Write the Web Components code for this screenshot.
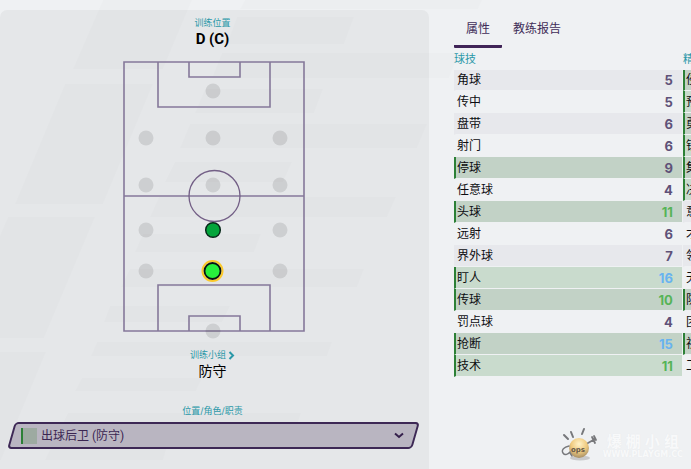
<!DOCTYPE html>
<html lang="zh-CN">
<head>
<meta charset="utf-8">
<title>训练位置</title>
<style>
  html { background: #eff1f3; }
  body { margin: 0; font-family: Inter, "Noto Sans CJK SC", sans-serif; color: #0c0c10; }
</style>
</head>
<body>
<player-screen></player-screen>

<script>
const define = (name, html, setup) => {
  const tpl = document.createElement('template');
  tpl.innerHTML = html;
  customElements.define(name, class extends HTMLElement {
    constructor() {
      super();
      this.attachShadow({ mode: 'open' }).append(tpl.content.cloneNode(true));
    }
    connectedCallback() { if (setup) setup(this, this.shadowRoot); }
  });
};

/* Slanted background bands */
define('slant-backdrop', `
<style>
  :host { position: absolute; inset: 0; overflow: hidden; pointer-events: none; }
  svg { display: block; fill: #000; fill-opacity: .01; }
</style>
<svg width="691" height="469" aria-hidden="true">
  <path d="M103 0H192L163 69H73ZM65 84H153L103 204H15ZM8 217H95L44 338H-44ZM-50 352H46L1 460H-90Z"/>
  <path d="M245 0H482L478 9H240ZM237 17H354L344 44H227ZM222 53H459L449 78H212ZM205 89H323L314 113H195ZM190 124H427L417 148H180ZM175 162H292L283 182H165ZM159 197H396L387 217H150ZM143 234H261L254 252H135ZM130 269H364L357 287H121ZM110 306H230L222 322H104ZM97 342H332L327 356H91ZM82 378H202L196 391H75ZM68 413H301L297 425H62ZM51 447H167L163 460H45Z"/>
</svg>`);

/* Label with its value below */
define('info-field', `
<style>
  :host { display: flex; flex-direction: column; align-items: center; }
  .label { font-size: 9px; line-height: 14px; color: #2a98a8; }
  .value { font-size: 14px; line-height: 18px; color: #000; }
</style>
<div class="label"><slot name="label"></slot></div>
<div class="value"><slot></slot></div>`);

/* Field with the positions that a player can train in */
define('position-pitch', `
<style>
  :host { display: block; }
  svg { display: block; }
  .lines { fill: none; stroke: #85789a; stroke-width: 1.6; }
  .spots { fill: #000; fill-opacity: .1; }
</style>
<svg width="182" height="278" viewBox="123 61 182 278" role="img" aria-label="D (C)">
  <g class="lines">
    <path d="M124 62H304V331H124ZM124 196H304M158 62V107H270V62M189 62V77H240V62M158 331V285H270V331M189 331V316H240V331"/>
    <circle cx="214.500" cy="196" r="25.500" stroke-width="1.300" stroke="#735f86"/>
  </g>
  <g class="spots">
    <circle cx="213" cy="91" r="7.500"/>
    <circle cx="146" cy="138" r="7.500"/><circle cx="213" cy="138" r="7.500"/><circle cx="280" cy="138" r="7.500"/>
    <circle cx="146" cy="185" r="7.500"/><circle cx="213" cy="185" r="7.500"/><circle cx="280" cy="185" r="7.500"/>
    <circle cx="146" cy="230" r="7.500"/><circle cx="280" cy="230" r="7.500"/>
    <circle cx="146" cy="271" r="7.500"/><circle cx="280" cy="271" r="7.500"/>
    <circle cx="213" cy="331" r="7.500"/>
  </g>
  <circle cx="213" cy="230" r="7.300" fill="#04a53b" stroke="#08291a" stroke-width="1.500"/>
  <circle cx="212.500" cy="271" r="10" fill="none" stroke="#fbc92c" stroke-width="2"/>
  <circle cx="212.500" cy="271" r="8" fill="#28f03c" stroke="#0a1410" stroke-width="1.800"/>
</svg>`);

/* Slanted drop-down */
define('role-select', `
<style>
  :host { display: block; position: relative; margin: 0 13px 0 11px; color: #3b2652; }
  .frame { position: absolute; inset: 0; box-sizing: border-box; border: 2px solid #3d2855;
    border-radius: 4px; background: #b9b5c1; transform: skewX(-16deg); }
  .row { position: relative; display: flex; align-items: center; height: 27px; }
  .swatch { width: 14px; height: 16px; margin-left: 10px; border-left: 2px solid #2c8036; background: #9daaa1; }
  select { appearance: none; flex: 1; min-width: 0; height: 27px; padding: 0 4px; border: 0; outline-offset: -4px;
    background: none; color: inherit; font: 12px/20px Roboto, "Noto Sans CJK SC", sans-serif; }
  svg { position: absolute; right: 12px; top: 9px; pointer-events: none; }
</style>
<div class="frame"></div>
<div class="row">
  <span class="swatch"></span>
  <select aria-label="位置/角色/职责"><option>出球后卫 (防守)</option></select>
  <svg width="10" height="9" viewBox="0 0 10 9" aria-hidden="true"><path d="M1 2.500 5 6 9 2.500" fill="none" stroke="#35204c" stroke-width="2"/></svg>
</div>`);

define('training-panel', `
<style>
  :host { display: flex; flex-direction: column; position: relative; box-sizing: border-box;
    margin-top: 10px; padding-top: 6px; background: rgba(0,0,0,.04); border-radius: 7px 7px 0 0; }
  strong { font: bold 15px/18px Roboto, sans-serif; }
  info-field, .role { padding-right: 4px; }
  position-pitch { align-self: center; margin-top: 13px; }
  .group { margin-top: 9px; }
  a { display: inline-flex; align-items: center; gap: 2px; color: inherit; text-decoration: none; }
  .role { margin: 24px 0 4px; text-align: center; font-size: 9px; line-height: 14px; color: #2a98a8; }
</style>
<info-field><span slot="label">训练位置</span><strong>D (C)</strong></info-field>
<position-pitch></position-pitch>
<info-field class="group"><a slot="label" href="#group">训练小组<svg width="7" height="9" viewBox="0 0 7 9" aria-hidden="true"><path d="M1.500 1 5 4.500 1.500 8" fill="none" stroke="currentColor" stroke-width="2"/></svg></a>防守</info-field>
<div class="role">位置/角色/职责</div>
<role-select></role-select>`);

define('tab-bar', `
<style>
  :host { display: flex; }
  button { height: 38px; padding: 0 11px; border: 0; border-bottom: 3px solid transparent; border-radius: 1px;
    background: none; color: #3f2d58; font: 12px/18px "Noto Sans CJK SC", sans-serif; }
  button[aria-selected=true] { padding: 0 12px; border-color: #402457; }
</style>
<button role="tab" aria-selected="true">属性</button>
<button role="tab" aria-selected="false">教练报告</button>`, (el, root) => { el.setAttribute('role', 'tablist'); });

/* rows="name:value[:key] ..." */
define('attribute-table', `
<style>
  :host { display: block; }
  table { width: 100%; border-spacing: 0; border-collapse: separate; }
  caption { height: 22px; text-align: left; font-size: 11px; line-height: 22px; color: #2a98a8; }
  tr { height: 22px; }
  tr:first-child { height: 21px; }
  th, td { padding: 0; border-bottom: 1px solid #eff1f3; font-size: 12px; line-height: 18px; }
  th { text-align: left; font-weight: 400; color: #0c0c10; padding-left: 1px; border-left: 2px solid transparent; white-space: nowrap; }
  td { text-align: right; font-size: 13px; font-weight: 700; padding-right: 9px; color: #5f5178; }
  tr:nth-child(odd) > * { background-color: #e7e8ec; }
  tr:nth-child(odd) > th { border-left-color: #e7e8ec; }
  tr.key:nth-child(odd) > * { background-color: #c2d2c6; }
  tr.key:nth-child(even) > * { background-color: #c9dbcd; }
  tr.key > th { border-left-color: #2c8036; }
  td.good { color: #56b457; }
  td.great { color: #68b3f0; }
</style>
<table><caption></caption><tbody></tbody></table>`, (el, root) => {
  root.querySelector('caption').textContent = el.getAttribute('heading');
  root.querySelector('tbody').replaceChildren(...el.getAttribute('rows').trim().split(/\s+/).map(item => {
    const [name, value, key] = item.split(':');
    const tr = document.createElement('tr');
    if (key) tr.className = 'key';
    const th = document.createElement('th');
    th.scope = 'row';
    th.textContent = name;
    const td = document.createElement('td');
    td.textContent = value;
    if (value >= 15) td.className = 'great'; else if (value >= 10) td.className = 'good';
    tr.append(th, td);
    return tr;
  }));
});

define('site-mark', `
<style>
  :host { position: absolute; right: 8px; bottom: 4px; display: flex; align-items: center; gap: 4px; }
  .words { text-align: center; color: #f8f9fa; text-shadow: 0 0 1px #e6e8ea; }
  .name { font: bold 15px/18px "Noto Sans CJK SC", sans-serif; display: flex; justify-content: space-between; padding: 0 4px; }
  .site { font: bold 8px/10px "DejaVu Sans", sans-serif; }
</style>
<svg width="38" height="38" viewBox="0 -1 38 38" aria-hidden="true">
  <defs><radialGradient id="ball" cx=".5" cy=".3" r=".7"><stop offset="0" stop-color="#fff2c8"/><stop offset=".55" stop-color="#f0cb80"/><stop offset="1" stop-color="#a78f66"/></radialGradient></defs>
  <ellipse cx="19" cy="30" rx="10" ry="2.500" fill="#c8c9cb"/>
  <circle cx="18" cy="20" r="10" fill="url(#ball)"/>
  <g fill="none" stroke="#77787b" stroke-linecap="round">
    <path d="M27 15 34 11M31 9 34 15M33 8 35 12" stroke-width="1.800"/>
    <path d="M3 7 7 11M10 4 12 9M23 1 21 6" stroke-width="2"/>
    <path d="M8 18C3 19 0 22 2 25S7 26 9 24M9 25 11 28" stroke-width="1.400"/>
  </g>
  <text x="10" y="24" font-family="DejaVu Sans" font-weight="bold" font-size="7" fill="#66594a">ops</text>
</svg>
<div class="words">
  <div class="name"><span>爆</span><span>棚</span><span>小</span><span>组</span></div>
  <div class="site">WWW.PLAYGM.CC</div>
</div>`);

define('player-screen', `
<style>
  :host { display: grid; grid-template-columns: minmax(0, 54fr) minmax(0, 33fr); position: relative;
    min-height: 100vh; overflow: hidden; }
  .detail { position: relative; min-width: 0; padding: 10px 0 0 25px; }
  .tables { display: grid; grid-template-columns: repeat(2, minmax(228px, 1fr)); gap: 1px; }
</style>
<slant-backdrop></slant-backdrop>
<training-panel></training-panel>
<section class="detail">
  <tab-bar></tab-bar>
  <div class="tables">
    <attribute-table heading="球技" rows="角球:5 传中:5 盘带:6 射门:6 停球:9:k 任意球:4 头球:11:k 远射:6 界外球:7 盯人:16:k 传球:10:k 罚点球:4 抢断:15:k 技术:11:k"></attribute-table>
    <attribute-table heading="精神" rows="侵略性::k 预判::k 勇敢::k 镇定::k 集中::k 决断::k 意志力: 才华: 领导力: 无球跑动: 防守站位::k 团队合作: 视野::k 工作投入:"></attribute-table>
  </div>
</section>
<site-mark></site-mark>`);
</script>
</body>
</html>
